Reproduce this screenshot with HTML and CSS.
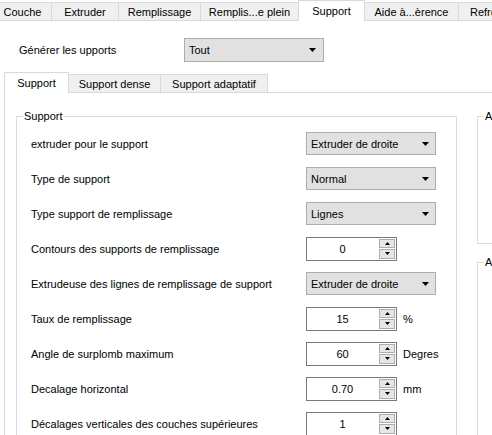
FILE: index.html
```html
<!DOCTYPE html>
<html>
<head>
<meta charset="utf-8">
<link rel="stylesheet" href="styles.css">
</head>
<body>
<div class="window">
  <div class="tabbar">
    <div class="tab t-couche">Couche</div>
    <div class="tab t-extruder">Extruder</div>
    <div class="tab t-rempl">Remplissage</div>
    <div class="tab t-remplplein">Remplis...e plein</div>
    <div class="tab active t-support">Support</div>
    <div class="tab t-aide">Aide à...èrence</div>
    <div class="tab t-refr">Refroidissement</div>
  </div>

  <div class="gen-row">
    <span class="gen-label">Générer les upports</span>
    <div class="combo combo-gen"><span>Tout</span><svg class="arrow" width="7" height="4" viewBox="0 0 7 4"><polygon points="0,0 7,0 3.5,4" fill="#000"/></svg></div>
  </div>

  <div class="subtabbar">
    <div class="subtab active s-support">Support</div>
    <div class="subtab s-dense">Support dense</div>
    <div class="subtab s-adapt">Support adaptatif</div>
  </div>

  <div class="panel">
    <fieldset class="group main">
      <legend>Support</legend>
      <div class="rows">
        <div class="row">
          <span class="lbl">extruder pour le support</span>
          <div class="combo combo-row"><span>Extruder de droite</span><svg class="arrow" width="7" height="4" viewBox="0 0 7 4"><polygon points="0,0 7,0 3.5,4" fill="#000"/></svg></div>
        </div>
        <div class="row">
          <span class="lbl">Type de support</span>
          <div class="combo combo-row"><span>Normal</span><svg class="arrow" width="7" height="4" viewBox="0 0 7 4"><polygon points="0,0 7,0 3.5,4" fill="#000"/></svg></div>
        </div>
        <div class="row">
          <span class="lbl">Type support de remplissage</span>
          <div class="combo combo-row"><span>Lignes</span><svg class="arrow" width="7" height="4" viewBox="0 0 7 4"><polygon points="0,0 7,0 3.5,4" fill="#000"/></svg></div>
        </div>
        <div class="row">
          <span class="lbl">Contours des supports de remplissage</span>
          <div class="spin"><span class="spin-val">0</span><div class="spin-btns"><span class="spin-btn"><svg width="5" height="3" viewBox="0 0 5 3"><polygon points="0,3 5,3 2.5,0" fill="#000"/></svg></span><span class="spin-btn"><svg width="5" height="3" viewBox="0 0 5 3"><polygon points="0,0 5,0 2.5,3" fill="#000"/></svg></span></div></div>
        </div>
        <div class="row">
          <span class="lbl">Extrudeuse des lignes de remplissage de support</span>
          <div class="combo combo-row"><span>Extruder de droite</span><svg class="arrow" width="7" height="4" viewBox="0 0 7 4"><polygon points="0,0 7,0 3.5,4" fill="#000"/></svg></div>
        </div>
        <div class="row">
          <span class="lbl">Taux de remplissage</span>
          <div class="spin"><span class="spin-val">15</span><div class="spin-btns"><span class="spin-btn"><svg width="5" height="3" viewBox="0 0 5 3"><polygon points="0,3 5,3 2.5,0" fill="#000"/></svg></span><span class="spin-btn"><svg width="5" height="3" viewBox="0 0 5 3"><polygon points="0,0 5,0 2.5,3" fill="#000"/></svg></span></div></div>
          <span class="unit">%</span>
        </div>
        <div class="row">
          <span class="lbl">Angle de surplomb maximum</span>
          <div class="spin"><span class="spin-val">60</span><div class="spin-btns"><span class="spin-btn"><svg width="5" height="3" viewBox="0 0 5 3"><polygon points="0,3 5,3 2.5,0" fill="#000"/></svg></span><span class="spin-btn"><svg width="5" height="3" viewBox="0 0 5 3"><polygon points="0,0 5,0 2.5,3" fill="#000"/></svg></span></div></div>
          <span class="unit">Degres</span>
        </div>
        <div class="row">
          <span class="lbl">Decalage horizontal</span>
          <div class="spin"><span class="spin-val">0.70</span><div class="spin-btns"><span class="spin-btn"><svg width="5" height="3" viewBox="0 0 5 3"><polygon points="0,3 5,3 2.5,0" fill="#000"/></svg></span><span class="spin-btn"><svg width="5" height="3" viewBox="0 0 5 3"><polygon points="0,0 5,0 2.5,3" fill="#000"/></svg></span></div></div>
          <span class="unit">mm</span>
        </div>
        <div class="row">
          <span class="lbl">Décalages verticales des couches supérieures</span>
          <div class="spin"><span class="spin-val">1</span><div class="spin-btns"><span class="spin-btn"><svg width="5" height="3" viewBox="0 0 5 3"><polygon points="0,3 5,3 2.5,0" fill="#000"/></svg></span><span class="spin-btn"><svg width="5" height="3" viewBox="0 0 5 3"><polygon points="0,0 5,0 2.5,3" fill="#000"/></svg></span></div></div>
        </div>
      </div>
    </fieldset>

    <div class="side">
      <fieldset class="group side1">
        <legend>Avancé</legend>
        <div class="side-rows1">
          <div class="side-row"><span>Accrochage</span></div>
        </div>
      </fieldset>
      <fieldset class="group side2">
        <legend>Autres</legend>
        <div class="side-rows2">
          <div class="side-row first"><span>–</span></div>
          <div class="side-row"><span class="check"></span></div>
          <div class="side-row"><span class="check"></span></div>
          <div class="side-row"><span class="small-txt">a</span></div>
          <div class="side-row"><span class="check"></span></div>
        </div>
      </fieldset>
    </div>
  </div>
</div>
</body>
</html>
```

FILE: styles.css
```css
* { box-sizing: border-box; }
html, body { margin: 0; padding: 0; }
body {
  width: 492px;
  height: 435px;
  overflow: hidden;
  background: #fff;
  color: #000;
  font-family: "Liberation Sans", Arial, sans-serif;
  font-size: 11px;
}
.window { width: 492px; height: 435px; overflow: hidden; }

/* top tabs */
.tabbar {
  display: flex;
  align-items: flex-end;
  height: 21px;
  width: 640px;
  margin-left: -7px;
  border-bottom: 1px solid #d9d9d9;
}
.tab {
  flex: 0 0 auto;
  height: 18px;
  display: flex;
  align-items: center;
  justify-content: center;
  background: #f0f0f0;
  border: 1px solid #d9d9d9;
  border-bottom: none;
  margin-right: -1px;
  white-space: nowrap;
  padding-top: 1px;
}
.tab.active {
  height: 21px;
  margin-bottom: -1px;
  background: #fff;
  position: relative;
  z-index: 1;
  padding-top: 0;
}
.t-couche { width: 59px; }
.t-extruder { width: 68px; }
.t-rempl { width: 83px; }
.t-remplplein { width: 99px; }
.t-support { width: 67px; }
.t-aide { width: 95px; }
.t-refr { width: 110px; justify-content: flex-start; padding-left: 11px; }

/* generate row */
.gen-row {
  display: flex;
  align-items: center;
  margin-top: 17px;
  padding-left: 19px;
  height: 24px;
}
.gen-label { width: 165px; }
.combo {
  display: flex;
  align-items: center;
  justify-content: space-between;
  background: #e1e1e1;
  border: 1px solid #adadad;
  padding: 0 6px 0 4px;
  height: 23px;
  white-space: nowrap;
}
.combo-gen { width: 140px; height: 24px; padding-right: 7px; }
.combo-row { width: 130px; }
.arrow { display: block; flex: 0 0 auto; }

/* sub tabs */
.subtabbar {
  display: flex;
  align-items: flex-end;
  height: 21px;
  margin: 10px 0 0 4px;
  border-bottom: 1px solid #d9d9d9;
}
.subtab {
  flex: 0 0 auto;
  height: 18px;
  display: flex;
  align-items: center;
  justify-content: center;
  background: #f0f0f0;
  border: 1px solid #d9d9d9;
  border-bottom: none;
  margin-right: -1px;
  white-space: nowrap;
  padding-top: 1px;
}
.subtab.active {
  height: 21px;
  margin-bottom: -1px;
  background: #fff;
  position: relative;
  z-index: 1;
  padding-top: 0;
}
.s-support { width: 65px; }
.s-dense { width: 93px; }
.s-adapt { width: 108px; }

/* panel */
.panel {
  display: flex;
  gap: 20px;
  margin-left: 4px;
  border-left: 1px solid #d9d9d9;
  padding: 15px 0 0 11px;
  height: 400px;
}
.group {
  margin: 0;
  padding: 0;
  border: 1px solid #dcdcdc;
  min-width: 0;
  flex: 0 0 auto;
}
.group legend {
  margin-left: 6px;
  padding: 0 1px;
  line-height: 16px;
}
.main { width: 441px; height: 380px; }
.rows { padding: 2px 0 0 14px; }
.row {
  display: flex;
  align-items: center;
  height: 35px;
  white-space: nowrap;
}
.lbl { width: 275px; flex: 0 0 auto; }
.unit { margin-left: 6px; }

.spin {
  display: flex;
  width: 91px;
  height: 24px;
  border: 1px solid #7a7a7a;
  background: #fff;
}
.spin-val { flex: 1; text-align: center; line-height: 22px; }
.spin-btns {
  display: flex;
  flex-direction: column;
  gap: 1px;
  padding: 1px;
  width: 18px;
}
.spin-btn {
  flex: 1;
  background: #e6e6e6;
  border: 1px solid #adadad;
  display: flex;
  align-items: center;
  justify-content: center;
}
.spin-btn svg { display: block; }

/* side column */
.side { display: flex; flex-direction: column; flex: 0 0 auto; }
.side1 { width: 200px; height: 136px; }
.side2 { width: 200px; height: 200px; margin-top: 10px; }
.side-rows1 { padding: 9px 0 0 14px; }
.side-rows2 { padding: 0 0 0 14px; }
.side-row {
  display: flex;
  align-items: center;
  height: 35px;
  white-space: nowrap;
}
.side-row.first { height: 30px; margin-bottom: 6px; }
.check {
  display: block;
  width: 13px;
  height: 13px;
  border: 1px solid #333;
  background: #fff;
}
.small-txt { color: #333399; }
```
